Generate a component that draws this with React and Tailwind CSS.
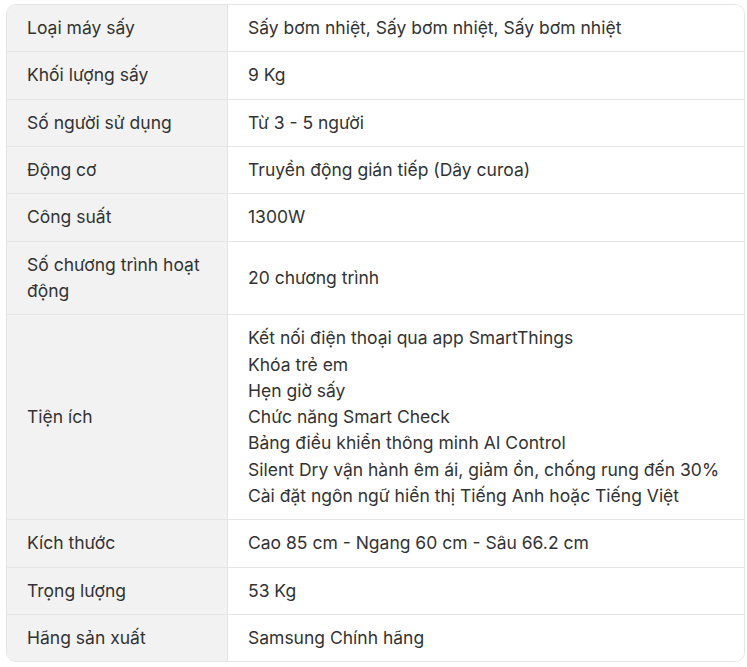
import React from 'react';

const specs = [
    { label: 'Loại máy sấy', value: ['Sấy bơm nhiệt, Sấy bơm nhiệt, Sấy bơm nhiệt'] },
    { label: 'Khối lượng sấy', value: ['9 Kg'] },
    { label: 'Số người sử dụng', value: ['Từ 3 - 5 người'] },
    { label: 'Động cơ', value: ['Truyền động gián tiếp (Dây curoa)'] },
    { label: 'Công suất', value: ['1300W'] },
    { label: 'Số chương trình hoạt động', value: ['20 chương trình'] },
    {
        label: 'Tiện ích',
        value: [
            'Kết nối điện thoại qua app SmartThings',
            'Khóa trẻ em',
            'Hẹn giờ sấy',
            'Chức năng Smart Check',
            'Bảng điều khiển thông minh AI Control',
            'Silent Dry vận hành êm ái, giảm ồn, chống rung đến 30%',
            'Cài đặt ngôn ngữ hiển thị Tiếng Anh hoặc Tiếng Việt',
        ],
    },
    { label: 'Kích thước', value: ['Cao 85 cm - Ngang 60 cm - Sâu 66.2 cm'] },
    { label: 'Trọng lượng', value: ['53 Kg'] },
    { label: 'Hãng sản xuất', value: ['Samsung Chính hãng'] },
];

export default function App() {
    return (
        <div className="bg-white pt-[4px] pl-[6px] pr-[2px] font-['Inter',sans-serif] text-[17.5px] leading-[26.32px] text-[#333]">
            <div className="border border-[#e5e5e5] rounded-[10px] overflow-hidden">
                {specs.map((row, i) => (
                    <div key={i} className={`flex ${i > 0 ? 'border-t border-[#e5e5e5]' : ''}`}>
                        <div className="w-[221px] shrink-0 bg-[#f2f2f2] border-r border-[#e5e5e5] px-[20px] py-[10px] flex items-center">
                            <span>{row.label}</span>
                        </div>
                        <div className="flex-1 bg-white px-[20px] py-[10px] flex flex-col justify-center">
                            {row.value.map((v, j) => (
                                <div key={j}>{v}</div>
                            ))}
                        </div>
                    </div>
                ))}
            </div>
        </div>
    );
}
